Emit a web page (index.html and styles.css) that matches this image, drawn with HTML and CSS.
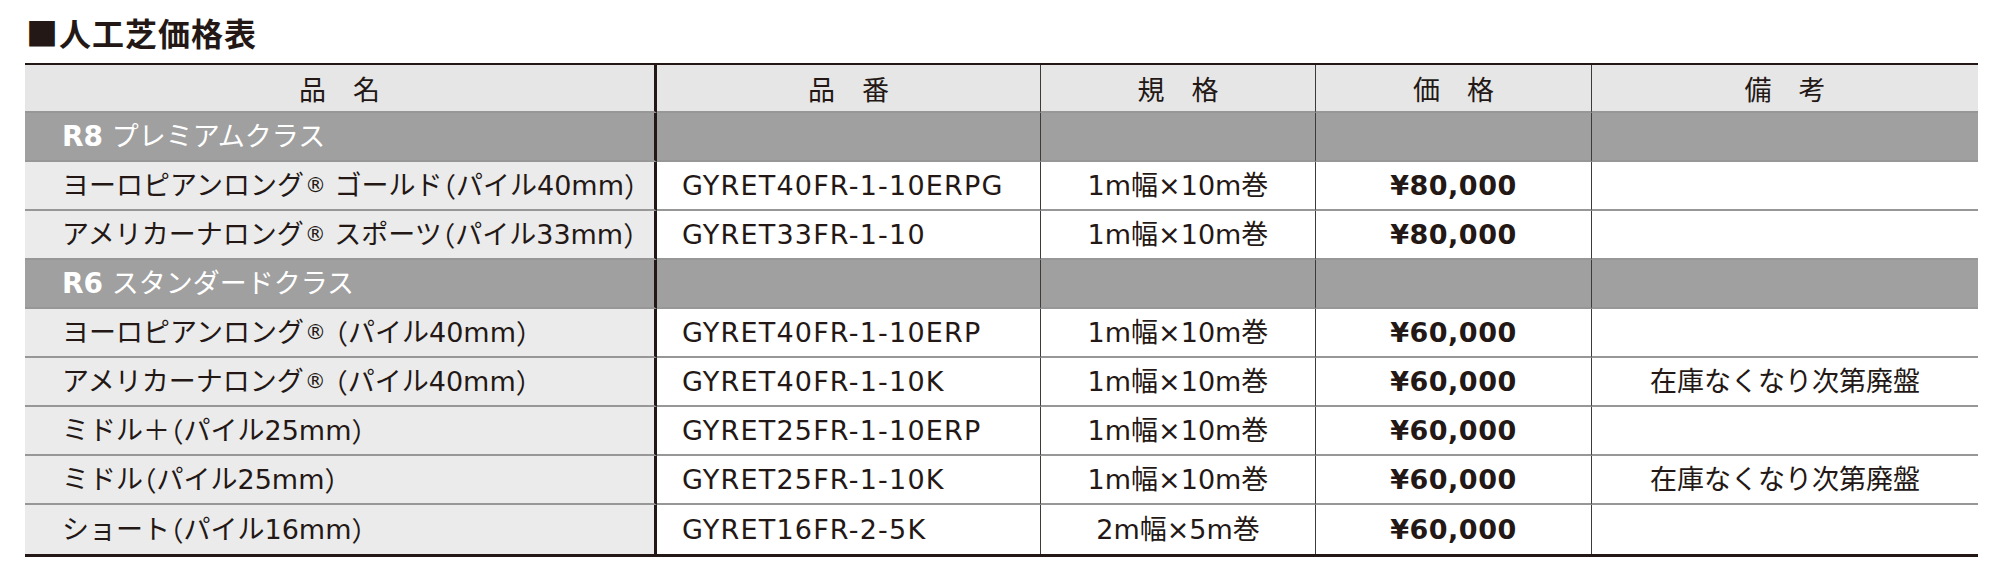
FILE: index.html
```html
<!DOCTYPE html>
<html lang="ja">
<head>
<meta charset="utf-8">
<title>人工芝価格表</title>
<link rel="stylesheet" href="styles.css">
</head>
<body>
<div class="page">
  <h1 class="title">■人工芝価格表</h1>
  <div class="price-table">
    <div class="row head">
      <div class="cell c1 center">品　名</div>
      <div class="cell c2 center">品　番</div>
      <div class="cell c3 center">規　格</div>
      <div class="cell c4 center">価　格</div>
      <div class="cell c5 center">備　考</div>
    </div>

    <div class="row section">
      <div class="cell c1 name"><b class="grade">R8</b>&nbsp;プレミアムクラス</div>
      <div class="cell c2"></div>
      <div class="cell c3"></div>
      <div class="cell c4"></div>
      <div class="cell c5"></div>
    </div>
    <div class="row item">
      <div class="cell c1 name">ヨーロピアンロング<sup class="reg">®</sup>&nbsp;ゴールド<span class="p">（</span>パイル40mm<span class="p">）</span></div>
      <div class="cell c2 code">GYRET40FR-1-10ERPG</div>
      <div class="cell c3 center">1m幅×10m巻</div>
      <div class="cell c4 center price">¥80,000</div>
      <div class="cell c5 center"></div>
    </div>
    <div class="row item">
      <div class="cell c1 name">アメリカーナロング<sup class="reg">®</sup>&nbsp;スポーツ<span class="p">（</span>パイル33mm<span class="p">）</span></div>
      <div class="cell c2 code">GYRET33FR-1-10</div>
      <div class="cell c3 center">1m幅×10m巻</div>
      <div class="cell c4 center price">¥80,000</div>
      <div class="cell c5 center"></div>
    </div>

    <div class="row section">
      <div class="cell c1 name"><b class="grade">R6</b>&nbsp;スタンダードクラス</div>
      <div class="cell c2"></div>
      <div class="cell c3"></div>
      <div class="cell c4"></div>
      <div class="cell c5"></div>
    </div>
    <div class="row item">
      <div class="cell c1 name">ヨーロピアンロング<sup class="reg">®</sup>&nbsp;<span class="p">（</span>パイル40mm<span class="p">）</span></div>
      <div class="cell c2 code">GYRET40FR-1-10ERP</div>
      <div class="cell c3 center">1m幅×10m巻</div>
      <div class="cell c4 center price">¥60,000</div>
      <div class="cell c5 center"></div>
    </div>
    <div class="row item">
      <div class="cell c1 name">アメリカーナロング<sup class="reg">®</sup>&nbsp;<span class="p">（</span>パイル40mm<span class="p">）</span></div>
      <div class="cell c2 code">GYRET40FR-1-10K</div>
      <div class="cell c3 center">1m幅×10m巻</div>
      <div class="cell c4 center price">¥60,000</div>
      <div class="cell c5 center">在庫なくなり次第廃盤</div>
    </div>
    <div class="row item">
      <div class="cell c1 name">ミドル＋<span class="p">（</span>パイル25mm<span class="p">）</span></div>
      <div class="cell c2 code">GYRET25FR-1-10ERP</div>
      <div class="cell c3 center">1m幅×10m巻</div>
      <div class="cell c4 center price">¥60,000</div>
      <div class="cell c5 center"></div>
    </div>
    <div class="row item">
      <div class="cell c1 name">ミドル<span class="p">（</span>パイル25mm<span class="p">）</span></div>
      <div class="cell c2 code">GYRET25FR-1-10K</div>
      <div class="cell c3 center">1m幅×10m巻</div>
      <div class="cell c4 center price">¥60,000</div>
      <div class="cell c5 center">在庫なくなり次第廃盤</div>
    </div>
    <div class="row item last">
      <div class="cell c1 name">ショート<span class="p">（</span>パイル16mm<span class="p">）</span></div>
      <div class="cell c2 code">GYRET16FR-2-5K</div>
      <div class="cell c3 center">2m幅×5m巻</div>
      <div class="cell c4 center price">¥60,000</div>
      <div class="cell c5 center"></div>
    </div>
  </div>
</div>
</body>
</html>
```

FILE: styles.css
```css
html, body {
  margin: 0;
  padding: 0;
  background: #ffffff;
}

.page {
  padding: 16px 0 0 25px;
  color: #231815;
  font-family: "DejaVu Sans", "Noto Sans CJK JP", sans-serif;
}

.title {
  margin: 0 0 15px 1px;
  font-family: "Noto Sans CJK JP", sans-serif;
  font-size: 32px;
  line-height: 32px;
  font-weight: 700;
  color: #231815;
  letter-spacing: 1px;
}

.price-table {
  width: 1953px;
  border-top: 2px solid #231815;
  border-bottom: 3px solid #231815;
}

.row {
  display: grid;
  grid-template-columns: 632px 384px 275px 276px 386px;
  height: 49px;
}

.row.head {
  height: 48px;
}

.cell {
  box-sizing: border-box;
  display: flex;
  align-items: center;
  border-bottom: 2px solid #979797;
  border-right: 1px solid #3e3a39;
  font-size: 27px;
  line-height: 1;
  white-space: nowrap;
  background: #ffffff;
}

.row.last .cell {
  border-bottom: none;
}

.cell.c1 {
  border-right: 3px solid #231815;
  background: #ebebeb;
}

.cell.c5 {
  border-right: none;
}

.row.head .cell {
  background: #e6e6e6;
  font-family: "Noto Sans CJK JP", sans-serif;
  font-size: 27px;
}

.row.section .cell {
  background: #a0a0a0;
  color: #ffffff;
}

.center {
  justify-content: center;
}

.name {
  padding-left: 37px;
}

.code {
  padding-left: 25px;
  letter-spacing: 1.2px;
}

.grade {
  font-weight: 700;
  font-size: 28px;
}

.p {
  font-family: "Noto Sans CJK JP", sans-serif;
  font-feature-settings: "halt";
}

.reg {
  font-size: 21px;
  line-height: 1;
  vertical-align: 9px;
  margin-left: 1px;
}

.price {
  font-weight: 700;
  font-size: 27px;
  letter-spacing: 0.5px;
}
```
